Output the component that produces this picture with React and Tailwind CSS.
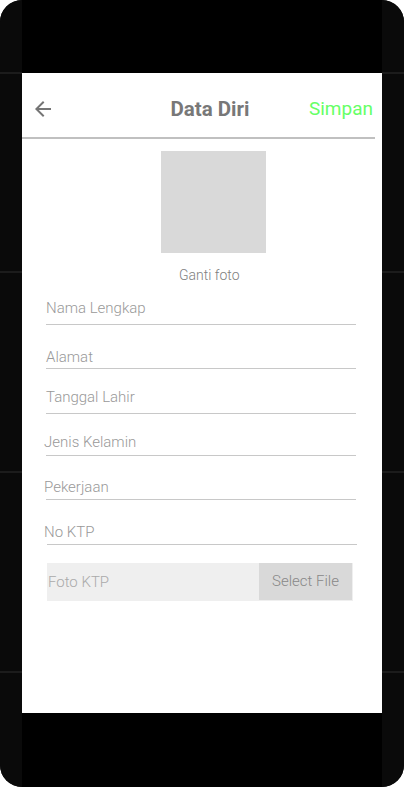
import React from 'react';

const fields = [
  { label: 'Nama Lengkap', h: 'h-[35px]', pb: 'pb-[7px]', pl: 'pl-0', ml: 'ml-[24px]' },
  { label: 'Alamat', h: 'h-[44px]', pb: 'pb-[2px]', pl: 'pl-0', ml: 'ml-[24px]' },
  { label: 'Tanggal Lahir', h: 'h-[45px]', pb: 'pb-[7px]', pl: 'pl-0', ml: 'ml-[24px]' },
  { label: 'Jenis Kelamin', h: 'h-[42px]', pb: 'pb-[4px]', pl: '-ml-[2px]', ml: 'ml-[24px]' },
  { label: 'Pekerjaan', h: 'h-[44px]', pb: 'pb-[3px]', pl: '-ml-[2px]', ml: 'ml-[24px]' },
  { label: 'No KTP', h: 'h-[45px]', pb: 'pb-[3px]', pl: '-ml-[3px]', ml: 'ml-[25px]' },
];

function SideBar() {
  return (
    <div className="w-[22px] h-full flex flex-col bg-[#0a0a0a]">
      <div className="h-[72px]" />
      <div className="h-[2px] bg-[#1c1c1c]" />
      <div className="h-[197px]" />
      <div className="h-[2px] bg-[#1c1c1c]" />
      <div className="h-[198px]" />
      <div className="h-[2px] bg-[#1c1c1c]" />
      <div className="h-[198px]" />
      <div className="h-[2px] bg-[#1c1c1c]" />
    </div>
  );
}

export default function App() {
  return (
    <div className="w-[404px] h-[787px] bg-white" style={{ fontFamily: 'Roboto, "Liberation Sans", sans-serif' }}>
      <div className="w-full h-full flex rounded-[22px] overflow-hidden bg-[#0a0a0a]">
        <SideBar />
        <div className="w-[360px] h-full flex flex-col bg-black">
          <div className="h-[73px]" />
          <div className="h-[640px] bg-white flex flex-col">
            {/* Header */}
            <div className="h-[64px] flex items-center">
              <div className="w-[24px] h-[24px] ml-[9px] mt-[8px]">
                <svg viewBox="0 0 24 24" width="24" height="24" fill="#757575">
                  <path d="M20 11H7.83l5.59-5.59L12 4l-8 8 8 8 1.41-1.41L7.83 13H20v-2z" />
                </svg>
              </div>
              <div className="flex-1 text-center mt-[9px] ml-[56px] text-[20.5px] font-bold text-[#787878]">Data Diri</div>
              <div className="mr-[9px] mt-[9px] text-[19px] text-[#66ff66]">Simpan</div>
            </div>
            <div className="h-[2px] bg-[#c0c0c0] mr-[7px]" />

            {/* Photo */}
            <div className="ml-[139px] mt-[12px] w-[105px] h-[102px] bg-[#d9d9d9]" />
            <div className="mt-[13px] ml-[157px] text-[14px] leading-[18px] font-light text-[#808080]">Ganti foto</div>

            {/* Fields */}
            <div className="flex flex-col mt-[6px]">
              {fields.map((f) => (
                <div
                  key={f.label}
                  className={`${f.h} ${f.pb} ${f.ml} w-[310px] flex items-end border-b border-[#c8c8c8]`}
                >
                  <span className={`${f.pl} text-[15px] leading-[18px] font-light text-[#999]`}>{f.label}</span>
                </div>
              ))}
            </div>

            {/* File picker */}
            <div className="ml-[25px] mt-[18px] w-[306px] h-[38px] bg-[#efefef] flex items-start pr-[1px]">
              <div className="flex-1 h-[38px] flex items-center pl-[1px] text-[15px] font-light text-[#aaa]">Foto KTP</div>
              <div className="w-[93px] h-[37px] bg-[#d9d9d9] flex items-center justify-center text-[15px] font-light text-[#888]">
                Select File
              </div>
            </div>
          </div>
          <div className="flex-1" />
        </div>
        <SideBar />
      </div>
    </div>
  );
}
